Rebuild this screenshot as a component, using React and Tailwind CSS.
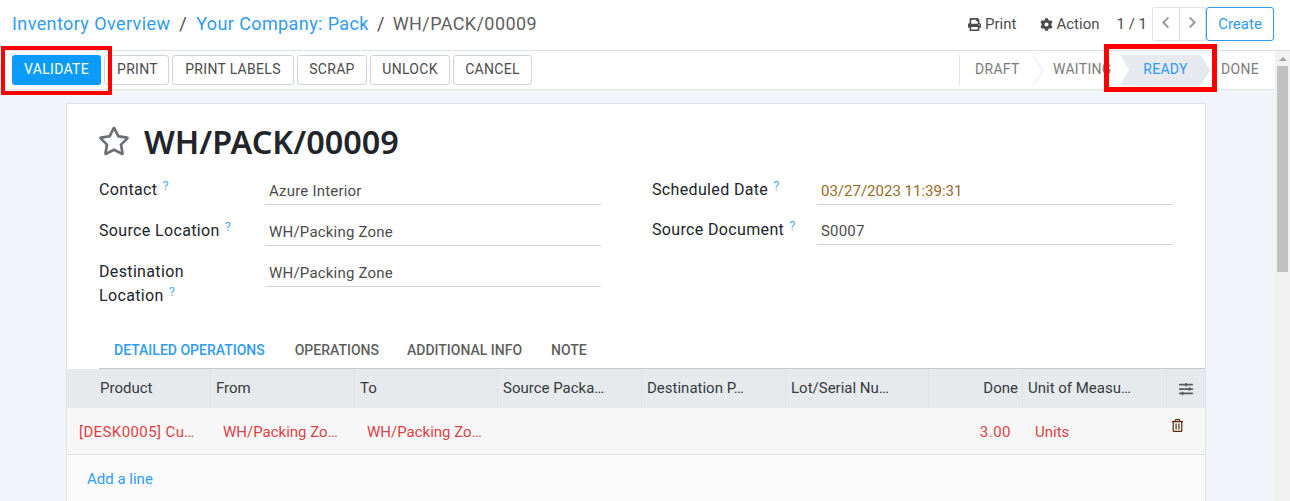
import { FaPrint, FaCog, FaChevronLeft, FaChevronRight, FaRegStar, FaRegTrashAlt, FaSlidersH } from 'react-icons/fa'

function ToolButton({ label, w }) {
  return (
    <button className={`h-[30px] pb-[2px] ${w} rounded-[3px] border border-[#ced4da] bg-white text-[14px] tracking-[0.3px] text-[#4c4c4c] text-center`}>{label}</button>
  )
}

function Help() {
  return <sup className="ml-[5px] text-[13px] text-[#5aabf2] relative -top-[5px]">?</sup>
}

function Field({ label, value, accent = 'text-[#4c4c4c] tracking-[0.2px]', h = 'h-[41px]', labelW = 'w-[166px]' }) {
  return (
    <div className={`flex ${h}`}>
      <div className={`${labelW} shrink-0 pt-[4px] text-[16px] tracking-[0.35px] leading-[24px] text-[#212529]`}>{label}</div>
      <div className={`flex-1 h-[31px] pt-[6px] pl-[4px] border-b border-[#ced4da] text-[15px] leading-[22px] ${accent}`}>{value}</div>
    </div>
  )
}

function Head({ label, right, pad = 'pl-[5px]' }) {
  return (
    <div className={`h-full flex items-center border-r border-[#dee2e6] text-[15px] text-[#343a40] ${right ? 'justify-end pr-[4px]' : pad}`}>
      <span>{label}</span>
    </div>
  )
}

export default function App() {
  const cols = 'grid grid-cols-[144px_144px_143px_144px_144px_143px_94px_144px_38px]'
  return (
    <div className="relative w-[1290px] h-[501px] overflow-hidden bg-white font-['Roboto',sans-serif]">
      {/* breadcrumb bar */}
      <div className="h-[51px] border-b border-[#dee2e6] flex items-center pl-[12px] pr-[16px]">
        <div className="flex items-center pb-[4px] text-[18px] text-[#4c4c4c] tracking-[0.4px]">
          <span className="text-[#2f9bf4]">Inventory Overview</span>
          <span className="mx-[9px]">/</span>
          <span className="text-[#2f9bf4]">Your Company: Pack</span>
          <span className="mx-[8px]">/</span>
          <span className="text-[#5f5f5f]">WH/PACK/00009</span>
        </div>
        <div className="ml-auto flex items-center pb-[2px] text-[15px] text-[#4c4c4c]">
          <FaPrint size={13} className="mr-[4px]" />
          <span>Print</span>
          <FaCog size={13} className="ml-[24px] mr-[3px]" />
          <span>Action</span>
          <span className="ml-[17px] mr-[5px]">1 / 1</span>
          <div className="flex h-[34px] w-[54px] border border-[#dee2e6] rounded-[3px] divide-x divide-[#dee2e6]">
            <div className="flex-1 flex items-center justify-center pb-[3px]"><FaChevronLeft size={13} className="text-[#9a9a9a]" /></div>
            <div className="flex-1 flex items-center justify-center pb-[3px]"><FaChevronRight size={13} className="text-[#9a9a9a]" /></div>
          </div>
          <button className="h-[34px] w-[68px] rounded-[3px] border border-[#2f9bf4] text-[#2f9bf4] text-[15px]">Create</button>
        </div>
      </div>

      <div className="flex h-[450px]">
        <div className="w-[1275px] shrink-0">
          {/* button + status bar */}
          <div className="h-[39px] border-b border-[#dee2e6] flex items-center pl-[12px]">
            <div className="flex items-center">
              <button className="h-[30px] pb-[2px] w-[89px] rounded-[3px] bg-[#0d9bfb] text-white text-[14px] tracking-[0.3px]">VALIDATE</button>
              <div className="ml-[3px]"><ToolButton label="PRINT" w="w-[65px] pl-[2px]" /></div>
              <div className="ml-[3px]"><ToolButton label="PRINT LABELS" w="w-[122px]" /></div>
              <div className="ml-[3px]"><ToolButton label="SCRAP" w="w-[70px]" /></div>
              <div className="ml-[3px]"><ToolButton label="UNLOCK" w="w-[80px]" /></div>
              <div className="ml-[3px]"><ToolButton label="CANCEL" w="w-[79px]" /></div>
            </div>
            <div className="ml-auto w-[316px] h-[31px] flex items-center text-[14px] tracking-[0.3px] text-[#7b7b7b] border-l border-[#dee2e6] pl-[15px]">
              <span className="w-[58px] shrink-0 pb-[2px]">DRAFT</span>
              <svg width="20" height="31" viewBox="0 0 20 31" className="shrink-0" fill="none"><path d="M0 0 L10 15.5 L0 31" stroke="#e4e6e9" strokeWidth="1" /></svg>
              <span className="w-[67px] shrink-0 pb-[2px] overflow-hidden whitespace-nowrap">WAITING</span>
              <div className="w-[91px] h-[31px] pb-[2px] shrink-0 bg-[#e6e9ed] [clip-path:polygon(0_0,88%_0,100%_50%,88%_100%,0_100%,10%_50%)] flex items-center justify-center text-[#2f9bf4]">READY</div>
              <span className="ml-[10px] pb-[2px]">DONE</span>
            </div>
          </div>

          {/* sheet */}
          <div className="h-[411px] overflow-hidden bg-[#f0f4f9] pl-[66px] pt-[13px]">
            <div className="w-[1140px] h-[420px] bg-white border border-[#dee2e6] border-b-0">
              <div className="flex items-center pl-[31px] pt-[13px] h-[60px]">
                <FaRegStar size={32} className="text-[#6a6f75]" />
                <h1 className="ml-[14px] text-[32.4px] leading-[40px] font-semibold text-[#212529] font-['Noto_Sans',sans-serif]">WH/PACK/00009</h1>
              </div>

              <div className="flex pl-[32px] pt-[10px] h-[170px]">
                <div className="w-[502px]">
                  <Field label={<>Contact<Help /></>} value="Azure Interior" />
                  <Field label={<>Source Location<Help /></>} value="WH/Packing Zone" />
                  <Field label={<>Destination<br />Location<Help /></>} value="WH/Packing Zone" h="h-[56px]" />
                </div>
                <div className="w-[521px] ml-[51px]">
                  <Field label={<>Scheduled Date<Help /></>} value="03/27/2023 11:39:31" accent="text-[#9a6b1f]" h="h-[40px]" labelW="w-[165px]" />
                  <Field label={<>Source Document<Help /></>} value="S0007" labelW="w-[165px]" />
                </div>
              </div>

              {/* tabs */}
              <div className="ml-[32px] h-[34px] flex text-[14px] font-medium text-[#5f5f5f] leading-[32px]">
                <span className="ml-[15px] text-[#2f9bf4]">DETAILED OPERATIONS</span>
                <span className="ml-[30px]">OPERATIONS</span>
                <span className="ml-[28px]">ADDITIONAL INFO</span>
                <span className="ml-[29px]">NOTE</span>
              </div>

              {/* table */}
              <div className="ml-[32px] h-px bg-[#c6c9cc]"></div>
              <div className={`${cols} h-[39px] bg-[#e7eaed]`}>
                <Head label="Product" pad="pl-[33px]" />
                <Head label="From" />
                <Head label="To" />
                <Head label="Source Packa…" />
                <Head label="Destination P…" />
                <Head label="Lot/Serial Nu…" />
                <Head label="Done" right />
                <Head label="Unit of Measu…" />
                <div className="flex items-center justify-center"><FaSlidersH size={14} className="text-[#5a5a5a]" /></div>
              </div>
              <div className={`${cols} h-[47px] pt-[3px] bg-[#f7f7f7] border-b border-[#e6e6e6] text-[15px] text-[#dc3f45] items-center`}>
                <div className="pl-[12px] tracking-[0.4px]">[DESK0005] Cu…</div>
                <div className="pl-[12px]">WH/Packing Zo…</div>
                <div className="pl-[12px]">WH/Packing Zo…</div>
                <div></div>
                <div></div>
                <div></div>
                <div className="text-right pr-[12px] tracking-[0.5px]">3.00</div>
                <div className="pl-[12px]">Units</div>
                <div className="pb-[14px] pl-[4px]"><FaRegTrashAlt size={13} className="text-[#5a2a10]" /></div>
              </div>
              <div className="bg-[#fbfbfb] h-[60px] pl-[20px] pt-[13px] text-[15px] text-[#2f9bf4]">Add a line</div>
            </div>
          </div>
        </div>

        {/* scrollbar */}
        <div className="flex-1 bg-[#f1f1f1] flex flex-col items-center">
          <div className="h-[15px] flex items-center justify-center">
            <div className="w-0 h-0 border-x-[4px] border-x-transparent border-b-[4px] border-b-[#a3a3a3]"></div>
          </div>
          <div className="w-[11px] h-[206px] bg-[#c1c1c1]"></div>
        </div>
      </div>

      {/* red annotation boxes */}
      <div className="absolute left-[1px] top-[46px] w-[111px] h-[49px] border-[4px] border-[#ff0000] pointer-events-none"></div>
      <div className="absolute left-[1104px] top-[44px] w-[113px] h-[48px] border-[5px] border-[#ff0000] pointer-events-none"></div>
    </div>
  )
}
